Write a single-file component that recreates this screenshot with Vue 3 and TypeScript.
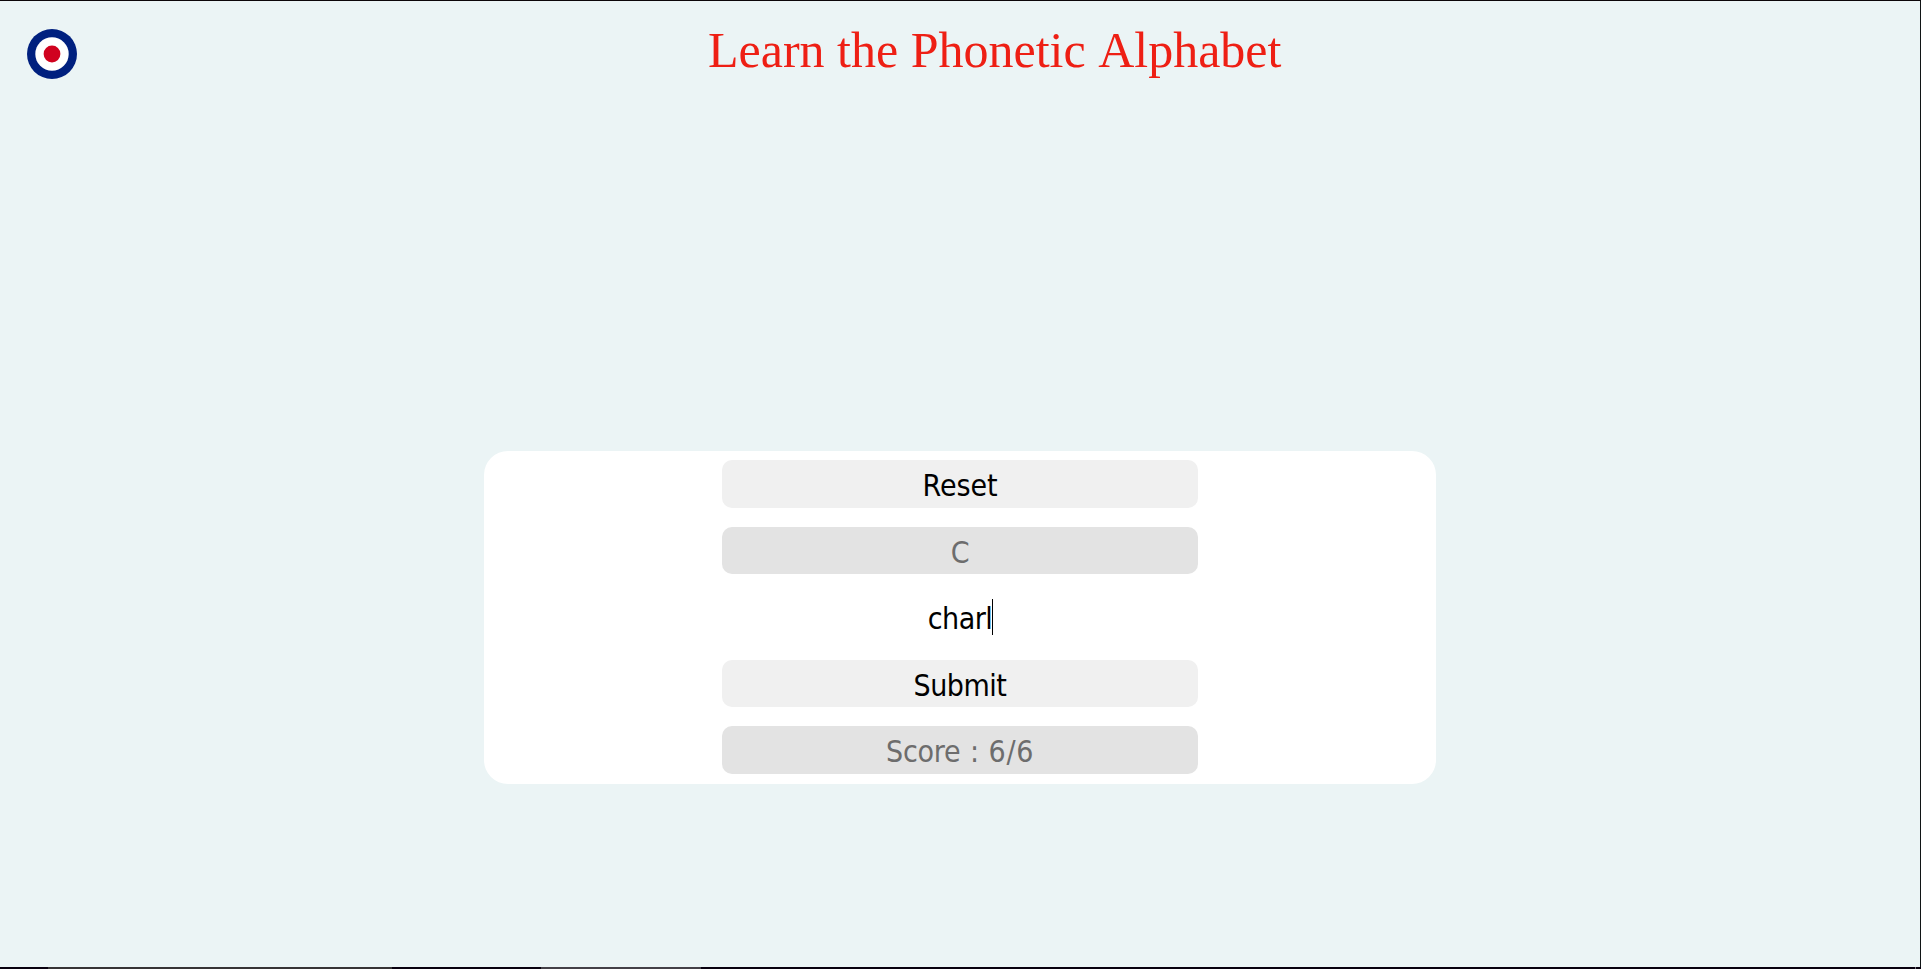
<script setup lang="ts">
import { ref } from 'vue'

const letter = ref<string>('C')
const answer = ref<string>('charl')
const correct = ref<number>(6)
const attempts = ref<number>(6)
</script>

<template>
  <div class="screen">
    <div class="page">
      <header class="header">
        <svg class="roundel" viewBox="0 0 50 50" aria-hidden="true">
          <circle cx="25" cy="25" r="25" fill="#00207f" />
          <circle cx="25" cy="25" r="16.7" fill="#fff" />
          <circle cx="25" cy="25" r="8.4" fill="#d0021f" />
        </svg>
        <h1 class="title">Learn the Phonetic Alphabet</h1>
      </header>
      <main class="card">
        <button class="row reset" type="button">Reset</button>
        <button class="row letter" type="button" disabled>{{ letter }}</button>
        <div class="row answer" role="textbox">
          <span class="typed">{{ answer }}<i class="caret"></i></span>
        </div>
        <button class="row submit" type="button">Submit</button>
        <button class="row score" type="button" disabled>Score : <span class="tally">{{ correct }}/{{ attempts }}</span></button>
      </main>
    </div>
    <footer class="taskbar">
      <span class="start"></span>
      <span class="search"></span>
      <span class="pinned"></span>
      <span class="running"></span>
      <span class="tray"></span>
      <span class="divider"></span>
      <span class="corner"></span>
    </footer>
  </div>
</template>

<style>
body {
  margin: 0;
  overflow: hidden;
}
</style>

<style scoped>
.screen {
  display: flex;
  flex-direction: column;
  width: 1921px;
  height: 969px;
}
.page {
  flex: 1;
  box-sizing: border-box;
  border-top: 1px solid #0b0508;
  border-right: 1px solid #101415;
  background: #ebf4f5;
}
.header {
  display: flex;
  align-items: flex-start;
  height: 450px;
  padding-left: 27px;
}
.roundel {
  width: 50px;
  height: 50px;
  margin-top: 28px;
}
.title {
  margin: 20px 0 0 631px;
  font: 400 50px/58px "Liberation Serif", "Times New Roman", serif;
  font-kerning: none;
  color: #ee1f14;
  white-space: nowrap;
}
.card {
  display: flex;
  flex-direction: column;
  align-items: center;
  gap: 19px;
  box-sizing: border-box;
  width: 952px;
  height: 333px;
  margin-left: 484px;
  padding: 9px 0 10px;
  border-radius: 24px;
  background: #fff;
}
.row {
  display: flex;
  align-items: center;
  justify-content: center;
  flex: 1 1 0;
  box-sizing: border-box;
  width: 476px;
  padding: 5px 0 0;
  border: 0;
  border-radius: 10px;
  background: #f0f0f0;
  color: #000;
  font: 400 30px/36px "DejaVu Sans Condensed", "DejaVu Sans", Tahoma, sans-serif;
  font-stretch: condensed;
  letter-spacing: -0.5px;
  white-space: pre;
}
.row:disabled {
  background: #e3e3e3;
  color: #6d6d6d;
}
.reset {
  letter-spacing: -0.1px;
}
.score {
  padding: 4px 0 1px;
  letter-spacing: -0.2px;
  word-spacing: 1.2px;
}
.tally {
  letter-spacing: 0.7px;
}
.answer {
  background: #fff;
}
.typed {
  position: relative;
}
.caret {
  position: absolute;
  top: -2px;
  right: -1px;
  width: 1px;
  height: 36px;
  background: #000;
}
.taskbar {
  display: flex;
  height: 2px;
  background: #08000f;
}
.start {
  width: 48px;
}
.search {
  width: 344px;
  background: #363435;
}
.pinned {
  width: 149px;
}
.running {
  width: 160px;
  background: #434047;
}
.tray {
  width: 1214px;
}
.divider {
  width: 1px;
  background: #77727c;
}
.corner {
  flex: 1;
}
</style>
